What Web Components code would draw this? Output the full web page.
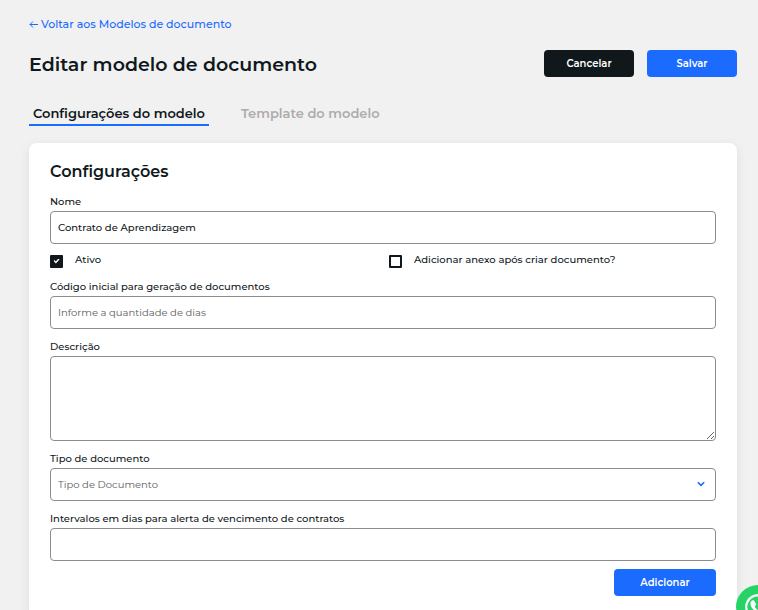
<!DOCTYPE html>
<html lang="pt-BR">
<head>
<meta charset="utf-8">
<meta name="viewport" content="width=device-width, initial-scale=1">
<title>Editar modelo de documento</title>
<style>
    :root {
        --blue: #1b6bff;
        --dark: #10181c;
        --line: #8c8c8c;
    }
    body {
        margin: 0;
        background: #f1f1f1;
        color: var(--dark);
        font-family: Montserrat, Inter, sans-serif;
        font-size: 10px;
    }
</style>
</head>
<body>
<document-page></document-page>

<script>
class BaseElement extends HTMLElement {
    constructor() {
        super()
        this.attachShadow({mode: "open"})
    }

    connectedCallback() {
        const template = document.createElement("template")
        template.innerHTML = `<style>* { box-sizing: border-box; }</style>` + this.render()
        this.shadowRoot.replaceChildren(template.content.cloneNode(true))
    }

    attr(name) {
        return this.getAttribute(name) || ""
    }
}

class AppButton extends BaseElement {
    render() {
        return `
            <style>
                :host { display: block; }
                button {
                    height: 27px;
                    min-width: var(--button-width, 90px);
                    padding: 0 20px;
                    border: 0;
                    border-radius: 4px;
                    background: var(--blue);
                    color: #fff;
                    font: inherit;
                    font-weight: 600;
                    cursor: pointer;
                }
                :host([variant="dark"]) button { background: var(--dark); }
            </style>
            <button type="button"><slot></slot></button>
        `
    }
}

class BackLink extends BaseElement {
    render() {
        return `
            <style>
                :host { display: block; font-size: 11px; line-height: 16px; font-weight: 500; }
                a { display: inline-flex; align-items: center; gap: 3px; color: var(--blue); text-decoration: none; }
                svg { width: 9px; height: 9px; }
            </style>
            <a href="#modelos">
                <svg viewBox="0 0 9 9" fill="none" stroke="currentColor" aria-hidden="true"><path d="M9 4.500H1M4 1.500l-3 3 3 3"/></svg>
                <slot></slot>
            </a>
        `
    }
}

class PageHeader extends BaseElement {
    render() {
        return `
            <style>
                :host { display: flex; align-items: flex-start; justify-content: space-between; gap: 13px; }
                h1 { margin: 0; font-size: 19px; line-height: 30px; font-weight: 600; }
                .actions { display: flex; gap: 13px; }
            </style>
            <h1><slot></slot></h1>
            <div class="actions"><slot name="actions"></slot></div>
        `
    }
}

class TabBar extends BaseElement {
    render() {
        return `
            <style>
                :host { display: block; }
                nav { display: flex; gap: 28px; }
            </style>
            <nav><slot></slot></nav>
        `
    }
}

class TabItem extends BaseElement {
    render() {
        return `
            <style>
                :host { display: block; }
                a {
                    display: block;
                    padding: 0 4px;
                    border-bottom: 2px solid transparent;
                    color: #acacac;
                    font-size: 13px;
                    line-height: 21px;
                    font-weight: 600;
                    text-decoration: none;
                }
                :host([active]) a { color: var(--dark); border-color: var(--blue); }
            </style>
            <a href="#${this.attr("target")}"><slot></slot></a>
        `
    }
}

class FormCard extends BaseElement {
    render() {
        return `
            <style>
                :host {
                    display: flex;
                    flex-direction: column;
                    gap: 10px;
                    padding: 16px 21px 24px;
                    border-radius: 8px;
                    background: #fff;
                    box-shadow: 0 3px 12px rgba(0, 0, 0, .08);
                }
                h2 { margin: 0; font-size: 16px; line-height: 25px; font-weight: 600; }
            </style>
            <h2>${this.attr("heading")}</h2>
            <slot></slot>
        `
    }
}

class FormField extends BaseElement {
    control() {
        const type = this.attr("type")
        if (type === "textarea") {
            return `<textarea id="control"></textarea>`
        }
        if (type === "select") {
            return `
                <div class="select">
                    <select id="control"><option>${this.attr("placeholder")}</option></select>
                    <svg viewBox="0 0 8 6" fill="none" stroke="currentColor" stroke-width="1.600" aria-hidden="true"><path d="M.8 1.200L4 4.400l3.200-3.200"/></svg>
                </div>
            `
        }
        return `<input id="control" type="text" value="${this.attr("value")}" placeholder="${this.attr("placeholder")}">`
    }

    render() {
        return `
            <style>
                :host { display: block; }
                label { display: block; margin-bottom: 1px; line-height: 16px; font-weight: 500; }
                input, textarea, select {
                    display: block;
                    width: 100%;
                    height: 33px;
                    margin: 0;
                    padding: 0 7px;
                    border: 1px solid var(--line);
                    border-radius: 4px;
                    background: #fff;
                    color: var(--dark);
                    font: inherit;
                    font-weight: 500;
                }
                textarea { height: 85px; padding: 7px; resize: vertical; }
                ::placeholder { color: #5c5c5c; opacity: 1; font-weight: 400; }
                .select { display: grid; align-items: center; }
                .select > * { grid-area: 1 / 1; }
                select { appearance: none; color: #5c5c5c; font-weight: 400; }
                svg { width: 8px; height: 6px; margin-right: 11px; justify-self: end; color: var(--blue); pointer-events: none; }
            </style>
            <label for="control">${this.attr("label")}</label>
            ${this.control()}
        `
    }
}

class CheckRow extends BaseElement {
    render() {
        return `
            <style>
                :host { display: grid; grid-template-columns: 1fr 1fr; gap: 12px; }
            </style>
            <slot></slot>
        `
    }
}

class CheckField extends BaseElement {
    render() {
        return `
            <style>
                :host { display: block; }
                label { display: flex; align-items: flex-start; gap: 12px; min-height: 15px; line-height: 12px; font-weight: 500; }
                input {
                    appearance: none;
                    flex: none;
                    display: grid;
                    place-items: center;
                    width: 13px;
                    height: 13px;
                    margin: 1px 0 0;
                    border: 2px solid var(--dark);
                    border-radius: 1px;
                }
                input:checked { background: var(--dark); }
                input:checked::before {
                    content: "";
                    width: 6px;
                    height: 5px;
                    background: #fff;
                    clip-path: polygon(0 50%, 18% 32%, 38% 58%, 82% 0, 100% 18%, 40% 100%);
                }
            </style>
            <label><input type="checkbox" ${this.hasAttribute("checked") ? "checked" : ""}><slot></slot></label>
        `
    }
}

class WhatsappButton extends BaseElement {
    render() {
        return `
            <style>
                /* floats half outside the bottom right corner */
                :host { position: fixed; right: -22px; bottom: -19px; }
                a {
                    display: grid;
                    place-items: center;
                    width: 44px;
                    height: 44px;
                    border-radius: 50%;
                    background: #25d366;
                    color: #fff;
                }
                svg { width: 26px; height: 26px; }
            </style>
            <a href="#whatsapp" aria-label="WhatsApp">
                <svg viewBox="0 0 24 24" fill="currentColor" aria-hidden="true">
                    <path fill-rule="evenodd" d="M12 0a12 12 0 0 0-10.3 18L0 24l6.2-1.6A12 12 0 1 0 12 0zm0 2.2a9.8 9.8 0 1 1-5.4 18l-3.5.9.9-3.4A9.8 9.8 0 0 1 12 2.2z"/>
                    <path d="M8.5 6.3c-.3-.6-.5-.6-.9-.6-.5 0-1 .1-1.4.6-.5.5-1.200 1.300-1.200 2.900 0 1.700 1.200 3.300 1.400 3.600.2.2 2.400 3.700 5.900 5.100 2.900 1.200 3.500.9 4.200.8.6-.1 2-.8 2.300-1.600.3-.8.3-1.500.2-1.600-.1-.2-.3-.3-.7-.5l-2.300-1.100c-.3-.1-.6-.2-.8.2l-1.100 1.300c-.2.2-.4.3-.8.1-1.500-.7-2.800-1.500-4.200-3.600-.2-.4 0-.5.2-.7l.9-1.300v-.6z"/>
                </svg>
            </a>
        `
    }
}

class DocumentPage extends BaseElement {
    render() {
        return `
            <style>
                :host { display: block; height: 100vh; overflow-y: auto; scrollbar-width: none; }
                main { padding: 16px 21px 24px 29px; }
                page-header { margin-top: 17px; }
                tab-bar { margin-top: 23px; }
                form-card { margin-top: 17px; }
                .add { --button-width: 102px; align-self: flex-end; margin-top: -2px; }
            </style>
            <main>
                <back-link>Voltar aos Modelos de documento</back-link>
                <page-header>
                    Editar modelo de documento
                    <app-button slot="actions" variant="dark">Cancelar</app-button>
                    <app-button slot="actions">Salvar</app-button>
                </page-header>
                <tab-bar>
                    <tab-item target="configuracoes" active>Configurações do modelo</tab-item>
                    <tab-item target="template">Template do modelo</tab-item>
                </tab-bar>
                <form-card heading="Configurações">
                    <form-field label="Nome" value="Contrato de Aprendizagem"></form-field>
                    <check-row>
                        <check-field checked>Ativo</check-field>
                        <check-field>Adicionar anexo após criar documento?</check-field>
                    </check-row>
                    <form-field label="Código inicial para geração de documentos" placeholder="Informe a quantidade de dias"></form-field>
                    <form-field label="Descrição" type="textarea"></form-field>
                    <form-field label="Tipo de documento" type="select" placeholder="Tipo de Documento"></form-field>
                    <form-field label="Intervalos em dias para alerta de vencimento de contratos"></form-field>
                    <app-button class="add">Adicionar</app-button>
                </form-card>
            </main>
            <whatsapp-button></whatsapp-button>
        `
    }
}

customElements.define("app-button", AppButton)
customElements.define("back-link", BackLink)
customElements.define("page-header", PageHeader)
customElements.define("tab-bar", TabBar)
customElements.define("tab-item", TabItem)
customElements.define("form-card", FormCard)
customElements.define("form-field", FormField)
customElements.define("check-row", CheckRow)
customElements.define("check-field", CheckField)
customElements.define("whatsapp-button", WhatsappButton)
customElements.define("document-page", DocumentPage)
</script>
</body>
</html>
